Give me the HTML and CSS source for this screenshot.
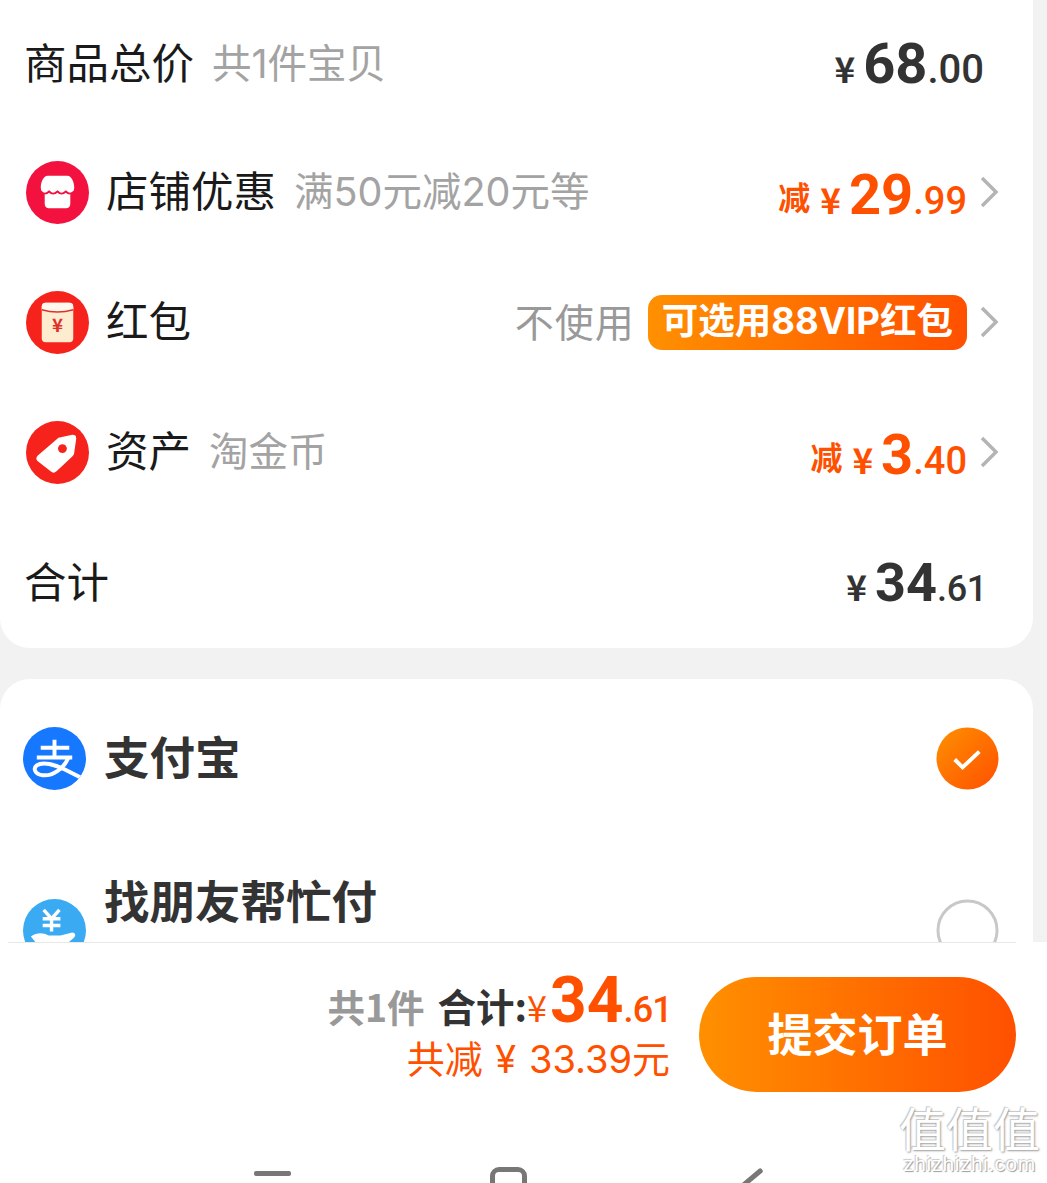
FILE: index.html
```html
<!DOCTYPE html>
<html lang="zh-CN">
<head>
    <meta charset="UTF-8">
    <meta name="viewport" content="width=device-width, initial-scale=1.0">
    <title>确认订单</title>
    <link rel="stylesheet" href="styles.css">
</head>
<body>
    <div class="scroll">
      <section class="card card-price">
        <div class="row row-first">
          <span class="label">商品总价</span><span class="sub">共1件宝贝</span>
          <span class="price price-dark price-end"><i class="yen">¥</i><b class="big">68</b><span class="cents cents-wide">.00</span></span>
        </div>
        <div class="row">
          <svg class="icon" viewBox="0 0 64 64"><circle cx="32" cy="32" r="32" fill="#f3123f"/><path d="M22 15h20c4 0 7 6 7 12 0 4-2 6-4 7v9c0 3-1 5-4 5H23c-3 0-4-2-4-5v-9c-2-1-4-3-4-7 0-6 3-12 7-12z" fill="#fff"/><path d="M15 31c3 3 5 3 8.500 0 3 3 5 3 8.500 0 3 3 5 3 8.500 0 3 3 5 3 8.500 0" fill="none" stroke="#f3123f" stroke-width="2"/></svg>
          <span class="label">店铺优惠</span><span class="sub">满50元减20元等</span>
          <span class="price price-orange price-end"><i class="jian">减</i><i class="yen">¥</i><b class="big">29</b><span class="cents">.99</span></span>
          <svg class="arrow" viewBox="0 0 20 32"><path d="M3 2l14 14L3 30" fill="none" stroke="#b4b4b4" stroke-width="3.500"/></svg>
        </div>
        <div class="row">
          <svg class="icon" viewBox="0 0 64 64"><circle cx="32" cy="32" r="32" fill="#f5231c"/><rect x="16" y="12" width="32" height="40" rx="4" fill="#fdeccf"/><path d="M16 16c0-3 2-4 4-4h24c2 0 4 1 4 4v3c-10 3-22 3-32 0z" fill="#fff8ee"/><path d="M16 19c10 3 22 3 32 0" fill="none" stroke="#e0302a" stroke-width="1.500"/><text class="packet-yen" x="32" y="42" text-anchor="middle">¥</text></svg>
          <span class="label">红包</span>
          <span class="none price-end">不使用</span>
          <span class="vip">可选用88VIP红包</span>
          <svg class="arrow" viewBox="0 0 20 32"><path d="M3 2l14 14L3 30" fill="none" stroke="#b4b4b4" stroke-width="3.500"/></svg>
        </div>
        <div class="row">
          <svg class="icon" viewBox="0 0 64 64"><circle cx="32" cy="32" r="32" fill="#f5231c"/><path d="M33 17l14-3c3 0 4 1 4 4l-2 14c0 2-1 3-2 4L31 51c-2 2-4 2-6 0L12 41c-2-2-2-4 0-6z" fill="#fff"/><circle cx="37" cy="28" r="4.500" fill="#f5231c"/></svg>
          <span class="label">资产</span><span class="sub">淘金币</span>
          <span class="price price-orange price-end"><i class="jian">减</i><i class="yen">¥</i><b class="big">3</b><span class="cents">.40</span></span>
          <svg class="arrow" viewBox="0 0 20 32"><path d="M3 2l14 14L3 30" fill="none" stroke="#b4b4b4" stroke-width="3.500"/></svg>
        </div>
        <div class="row row-total">
          <span class="label">合计</span>
          <span class="price price-dark price-end price-total"><i class="yen">¥</i><b class="big big-mid">34</b><span class="cents cents-small">.61</span></span>
        </div>
      </section>

      <section class="card card-pay">
        <div class="pay-row">
          <svg class="icon" viewBox="0 0 64 64"><defs><clipPath id="payClip"><circle cx="32" cy="32" r="32"/></clipPath></defs><circle cx="32" cy="32" r="32" fill="#1677ff"/><g clip-path="url(#payClip)" fill="none" stroke="#fff" stroke-width="4"><path d="M18 21h29M32 13v18M14 31h36"/><path d="M46 31C42 42 30 50 20 49 12 48 10 42 14 39c6-4 18-1 28 4l22 11"/></g></svg>
          <span class="pay-name">支付宝</span>
          <svg class="radio" viewBox="0 0 64 64"><defs><linearGradient id="checkFill" x1="0" y1="0" x2="1" y2="1"><stop offset="0" stop-color="#ff9000"/><stop offset="1" stop-color="#ff5000"/></linearGradient></defs><circle cx="32" cy="32" r="31.500" fill="url(#checkFill)"/><path d="M19 33l8 8 17-16" fill="none" stroke="#fff" stroke-width="4"/></svg>
        </div>
        <div class="pay-row pay-row-cut">
          <svg class="icon icon-low" viewBox="0 0 64 64"><circle cx="32" cy="32" r="32" fill="#3aaaf2"/><path d="M21 11l8 9 8-9M20 20h18M20 27h18M29 20v13" fill="none" stroke="#fff" stroke-width="3.500"/><path d="M8 38c6-4 12-4 18-1h12l12-3c3 0 4 3 2 5l-10 9H16z" fill="#fff"/></svg>
          <span class="pay-name">找朋友帮忙付</span>
          <svg class="radio radio-low" viewBox="0 0 64 64"><circle cx="32" cy="32" r="30" fill="none" stroke="#c8c8c8" stroke-width="3"/></svg>
        </div>
      </section>
    </div>

    <footer class="footer">
      <div class="bar">
        <div class="summary">
          <div class="sum-line"><span class="count">共1件</span><span class="sum-label">合计:</span><span class="sum-yen">¥</span><b class="sum-big">34</b><span class="sum-cents">.61</span></div>
          <div class="saved">共减 ¥ 33.39元</div>
        </div>
        <button class="submit">提交订单</button>
      </div>
      <div class="nav">
        <span class="nav-menu"></span>
        <span class="nav-home"></span>
        <span class="nav-back"></span>
      </div>
    </footer>

    <div class="watermark">
      <div class="wm-logo">值值值</div>
      <div class="wm-url">zhizhizhi.com</div>
    </div>
</body>
</html>
```

FILE: styles.css
```css
html, body {
    height: 100%;
}
body {
    margin: 0;
    height: 1183px;
    overflow: hidden;
    position: relative;
    background: #f2f2f2;
    font-family: "Noto Sans CJK SC", "Noto Sans", sans-serif;
    display: flex;
    flex-direction: column;
}
i {
    font-style: normal;
}
.scroll {
    height: 942px;
    overflow: hidden;
}
.card {
    width: 1033px;
    background: #fff;
    box-sizing: border-box;
}
.card-price {
    height: 648px;
    padding: 0 34px 0 25px;
    border-radius: 0 0 30px 30px;
}
.card-pay {
    height: 400px;
    margin-top: 31px;
    padding: 0 34px 0 23px;
    border-radius: 30px 30px 0 0;
}
.row {
    height: 130px;
    display: flex;
    align-items: center;
}
.row-first {
    height: 127px;
}
.row-total {
    height: 131px;
}
.icon {
    width: 63px;
    height: 63px;
    margin-left: 1px;
    margin-right: 18px;
    flex: none;
}
.label {
    font-size: 42.500px;
    margin-left: -1px;
    margin-bottom: 7px;
    color: #1a1a1a;
    white-space: nowrap;
}
.sub {
    font-family: "Inter", "Noto Sans CJK SC", sans-serif;
    font-size: 39.500px;
    color: #a3a3a3;
    margin-left: 18px;
    margin-bottom: 7px;
    white-space: nowrap;
}
.price-end {
    margin-left: auto;
}
.price {
    white-space: nowrap;
    font-family: "Roboto", "Noto Sans CJK SC", sans-serif;
    font-weight: 500;
    padding-right: 15px;
}
.price-total {
    padding-right: 12px;
}
.price-dark {
    color: #333;
}
.price-orange {
    color: #ff5000;
    padding-right: 0;
    margin-top: 5px;
}
.yen {
    font-size: 35px;
    font-family: "Noto Sans CJK SC", sans-serif;
    font-weight: 700;
    margin-right: 8px;
}
.jian {
    font-size: 32px;
    font-family: "Noto Sans CJK SC", sans-serif;
    font-weight: 700;
    vertical-align: 4px;
    margin-right: 10px;
}
.big {
    font-size: 56px;
    font-weight: 700;
}
.big-mid {
    font-size: 54px;
}
.cents {
    font-size: 38px;
}
.cents-wide {
    font-size: 40px;
}
.cents-small {
    font-size: 36px;
    letter-spacing: -0.300px;
}
.arrow {
    width: 20px;
    height: 32px;
    margin-left: 12px;
    flex: none;
}
.none {
    font-size: 39px;
    letter-spacing: 1px;
    color: #999;
    margin-right: 13px;
    margin-bottom: 5px;
}
.vip {
    height: 55px;
    line-height: 53px;
    padding: 0 14px;
    font-family: "Inter", "Noto Sans CJK SC", sans-serif;
    font-size: 36.500px;
    font-weight: 700;
    color: #fff;
    border-radius: 14px;
    background: linear-gradient(90deg, #ff9000, #ff5000);
    white-space: nowrap;
}
.packet-yen {
    font-size: 19px;
    font-weight: 700;
    fill: #e0302a;
}
.pay-row {
    height: 158px;
    display: flex;
    align-items: center;
}
.pay-row .icon {
    margin-left: 0;
    margin-right: 19px;
}
.pay-name {
    font-size: 45.500px;
    font-weight: 700;
    color: #333;
    margin-left: -1px;
    margin-bottom: 6px;
}
.radio {
    width: 63px;
    height: 63px;
    margin-left: auto;
}
.pay-row-cut {
    align-items: flex-start;
    padding-top: 29px;
    height: 126px;
}
.icon-low, .radio-low {
    margin-top: 33px;
}
.footer {
    height: 241px;
    box-sizing: border-box;
    background: #fff;
    padding: 35px 31px 0 8px;
    overflow: hidden;
    position: relative;
    flex: none;
}
.footer::before {
    content: "";
    position: absolute;
    top: 0;
    left: 8px;
    right: 31px;
    height: 1px;
    background: #e8e8e8;
}
.bar {
    display: flex;
    justify-content: flex-end;
    align-items: center;
    height: 115px;
}
.summary {
    display: flex;
    flex-direction: column;
    align-items: flex-end;
    margin-right: 29px;
    margin-bottom: 10px;
}
.sum-line {
    display: flex;
    align-items: baseline;
    height: 50px;
    line-height: 50px;
    margin-right: -2px;
}
.count {
    font-size: 37.500px;
    font-weight: 700;
    color: #999;
    margin-right: 13px;
}
.sum-label {
    font-size: 38.500px;
    font-weight: 700;
    color: #333;
}
.sum-yen {
    font-size: 36px;
    color: #ff5000;
    margin-right: 3px;
}
.sum-big {
    font-size: 64px;
    font-family: "Roboto", sans-serif;
    font-weight: 700;
    color: #ff5000;
}
.sum-cents {
    font-size: 36px;
    font-family: "Roboto", sans-serif;
    font-weight: 500;
    letter-spacing: -0.800px;
    color: #ff5000;
}
.saved {
    font-family: "Inter", "Noto Sans CJK SC", sans-serif;
    font-size: 38px;
    line-height: 48px;
    margin-top: 9px;
    color: #ff5000;
    word-spacing: 2px;
}
.submit {
    width: 317px;
    height: 115px;
    border: 0;
    border-radius: 58px;
    padding-bottom: 6px;
    background: linear-gradient(90deg, #ff9000, #ff5000);
    color: #fff;
    font-family: inherit;
    font-size: 45px;
    font-weight: 700;
}
.nav {
    position: relative;
    height: 60px;
    margin-top: 75px;
}
.nav-menu {
    position: absolute;
    left: 246px;
    top: 4px;
    width: 37px;
    height: 5px;
    border-radius: 2px;
    background: #777;
}
.nav-home {
    position: absolute;
    left: 482px;
    top: 0;
    width: 37px;
    height: 40px;
    box-sizing: border-box;
    border: 5px solid #777;
    border-radius: 9px;
}
.nav-back {
    position: absolute;
    left: 716px;
    top: 0;
    width: 38px;
    height: 5px;
    border-radius: 2px;
    background: #777;
    transform: rotate(-40deg);
    transform-origin: right center;
}
.watermark {
    position: absolute;
    left: 897px;
    top: 1102px;
    width: 145px;
    text-align: center;
    pointer-events: none;
}
.wm-logo {
    font-size: 47px;
    line-height: 50px;
    font-weight: 400;
    color: #fff;
    text-shadow: 1px 1px 2px #9a9a9a, -1px -1px 1px #c8c8c8;
    white-space: nowrap;
}
.wm-url {
    font-family: "Liberation Sans", sans-serif;
    font-size: 21px;
    line-height: 24px;
    letter-spacing: 0.500px;
    color: #fff;
    text-shadow: 1px 1px 1px #9a9a9a, -1px -1px 1px #c8c8c8;
}
```
